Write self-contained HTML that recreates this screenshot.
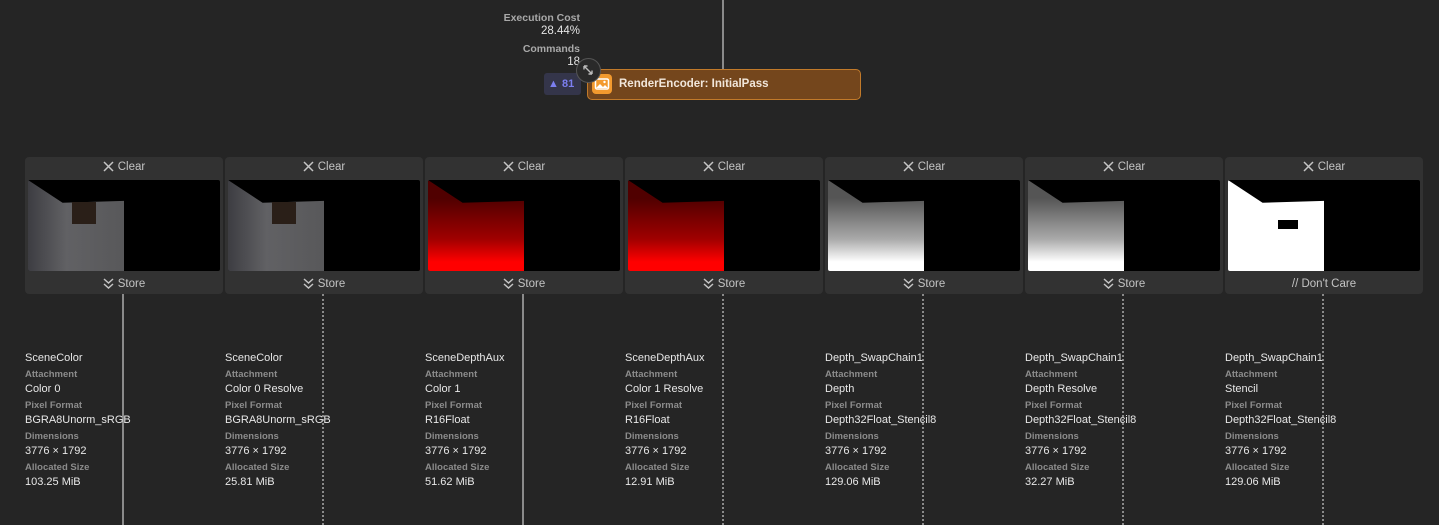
<!DOCTYPE html>
<html><head><meta charset="utf-8"><style>
*{margin:0;padding:0;box-sizing:border-box}
body{width:1439px;height:525px;background:#252525;position:relative;overflow:hidden;font-family:"Liberation Sans",sans-serif;color:#e4e4e4}
.a{position:absolute}
.card{position:absolute;top:157px;width:198px;height:137px;background:#323232;border-radius:4px}
.hd{position:absolute;left:0;right:0;text-align:center;font-size:11.5px;color:#c4c4c4;height:14px;line-height:14px}
.hd svg{vertical-align:-2px;margin-right:4px}
.img{position:absolute;left:3px;top:23px;width:192px;height:91px;background:#000;border-radius:2px;overflow:hidden}
.sh{position:absolute;left:0;top:0;width:96px;height:91px;clip-path:polygon(0 0,36% 25%,100% 23%,100% 100%,0 100%)}
.vl{position:absolute;width:0;top:294px;height:231px}
.sol{border-left:2px solid #8a8a8a}
.dash{border-left:2px dotted #8a8a8a}
.info{position:absolute;top:351px;font-size:11px;line-height:15.5px}
.info .l{font-size:9.5px;font-weight:bold;color:#8c8c8c}
.info .v{color:#e8e8e8}
</style></head><body>
<div class="a" style="left:722px;top:0;width:2px;height:70px;background:#8a8a8a"></div>
<div class="a" style="left:470px;top:12px;width:110px;text-align:right;font-size:10.5px;font-weight:bold;color:#a9a9a9">Execution Cost</div>
<div class="a" style="left:470px;top:25px;width:110px;text-align:right;font-size:11.5px;color:#e4e4e4">28.44%</div>
<div class="a" style="left:470px;top:43px;width:110px;text-align:right;font-size:10.5px;font-weight:bold;color:#a9a9a9">Commands</div>
<div class="a" style="left:470px;top:56px;width:110px;text-align:right;font-size:11.5px;color:#e4e4e4">18</div>
<div class="a" style="left:544px;top:73px;width:37px;height:22px;background:#34354a;border-radius:3px;font-size:11px;font-weight:bold;color:#7c7ff0;line-height:22px;padding-left:4px"><span style="font-size:11px">▲</span> 81</div>
<div class="a" style="left:587px;top:69px;width:274px;height:31px;background:#74461c;border:1.5px solid #c27a2a;border-radius:5px"></div>
<div class="a" style="left:592px;top:74px;width:20px;height:20px;background:#f39a2e;border-radius:4px">
<svg width="20" height="20" viewBox="0 0 20 20"><rect x="3.5" y="5" width="13" height="10" rx="1.5" fill="none" stroke="#fff" stroke-width="1.5"/><path d="M4 14 L8 10 L11 13 L13 11 L16 14Z" fill="#fff"/><circle cx="12.5" cy="8" r="1.2" fill="#fff"/></svg></div>
<div class="a" style="left:619px;top:78px;font-size:11.5px;font-weight:bold;color:#f1e6da">RenderEncoder: InitialPass</div>
<div class="a" style="left:576px;top:58px;width:25px;height:25px;border-radius:50%;background:#2a2a2a;border:1.5px solid #555">
<svg width="22" height="22" viewBox="0 0 22 22"><path d="M7 7 L15 15 M7 7 L7 10.5 M7 7 L10.5 7 M15 15 L15 11.5 M15 15 L11.5 15" stroke="#bbb" stroke-width="1.4" fill="none"/></svg></div>

<!-- cards -->
<div class="card" style="left:25px"><div class="hd" style="top:3px"><svg width="11" height="11" viewBox="0 0 11 11"><path d="M1 1L10 10M10 1L1 10" stroke="#c4c4c4" stroke-width="1.5"/></svg>Clear</div><div class="img"><div class="sh" style="background:linear-gradient(90deg,#3d3d42,#616164 40%,#58585a)"></div><div class="a" style="left:44px;top:22px;width:24px;height:22px;background:#2a1f18"></div></div><div class="hd" style="top:120px"><svg width="11" height="11" viewBox="0 0 11 11"><path d="M1 1L5.5 5L10 1M1 6L5.5 10L10 6" stroke="#c4c4c4" stroke-width="1.5" fill="none"/></svg>Store</div></div>
<div class="card" style="left:225px"><div class="hd" style="top:3px"><svg width="11" height="11" viewBox="0 0 11 11"><path d="M1 1L10 10M10 1L1 10" stroke="#c4c4c4" stroke-width="1.5"/></svg>Clear</div><div class="img"><div class="sh" style="background:linear-gradient(90deg,#3d3d42,#616164 40%,#58585a)"></div><div class="a" style="left:44px;top:22px;width:24px;height:22px;background:#2a1f18"></div></div><div class="hd" style="top:120px"><svg width="11" height="11" viewBox="0 0 11 11"><path d="M1 1L5.5 5L10 1M1 6L5.5 10L10 6" stroke="#c4c4c4" stroke-width="1.5" fill="none"/></svg>Store</div></div>
<div class="card" style="left:425px"><div class="hd" style="top:3px"><svg width="11" height="11" viewBox="0 0 11 11"><path d="M1 1L10 10M10 1L1 10" stroke="#c4c4c4" stroke-width="1.5"/></svg>Clear</div><div class="img"><div class="sh" style="background:linear-gradient(180deg,#500000 20%,#a00000 65%,#ff0000 90%)"></div></div><div class="hd" style="top:120px"><svg width="11" height="11" viewBox="0 0 11 11"><path d="M1 1L5.5 5L10 1M1 6L5.5 10L10 6" stroke="#c4c4c4" stroke-width="1.5" fill="none"/></svg>Store</div></div>
<div class="card" style="left:625px"><div class="hd" style="top:3px"><svg width="11" height="11" viewBox="0 0 11 11"><path d="M1 1L10 10M10 1L1 10" stroke="#c4c4c4" stroke-width="1.5"/></svg>Clear</div><div class="img"><div class="sh" style="background:linear-gradient(180deg,#500000 20%,#a00000 65%,#ff0000 90%)"></div></div><div class="hd" style="top:120px"><svg width="11" height="11" viewBox="0 0 11 11"><path d="M1 1L5.5 5L10 1M1 6L5.5 10L10 6" stroke="#c4c4c4" stroke-width="1.5" fill="none"/></svg>Store</div></div>
<div class="card" style="left:825px"><div class="hd" style="top:3px"><svg width="11" height="11" viewBox="0 0 11 11"><path d="M1 1L10 10M10 1L1 10" stroke="#c4c4c4" stroke-width="1.5"/></svg>Clear</div><div class="img"><div class="sh" style="background:linear-gradient(180deg,#555 20%,#aaa 65%,#fff 90%)"></div></div><div class="hd" style="top:120px"><svg width="11" height="11" viewBox="0 0 11 11"><path d="M1 1L5.5 5L10 1M1 6L5.5 10L10 6" stroke="#c4c4c4" stroke-width="1.5" fill="none"/></svg>Store</div></div>
<div class="card" style="left:1025px"><div class="hd" style="top:3px"><svg width="11" height="11" viewBox="0 0 11 11"><path d="M1 1L10 10M10 1L1 10" stroke="#c4c4c4" stroke-width="1.5"/></svg>Clear</div><div class="img"><div class="sh" style="background:linear-gradient(180deg,#555 20%,#aaa 65%,#fff 90%)"></div></div><div class="hd" style="top:120px"><svg width="11" height="11" viewBox="0 0 11 11"><path d="M1 1L5.5 5L10 1M1 6L5.5 10L10 6" stroke="#c4c4c4" stroke-width="1.5" fill="none"/></svg>Store</div></div>
<div class="card" style="left:1225px"><div class="hd" style="top:3px"><svg width="11" height="11" viewBox="0 0 11 11"><path d="M1 1L10 10M10 1L1 10" stroke="#c4c4c4" stroke-width="1.5"/></svg>Clear</div><div class="img"><div class="sh" style="background:#fff"></div><div class="a" style="left:50px;top:40px;width:20px;height:9px;background:#000"></div></div><div class="hd" style="top:120px">// Don't Care</div></div>

<div class="vl sol" style="left:122px"></div>
<div class="vl dash" style="left:322px"></div>
<div class="vl sol" style="left:522px"></div>
<div class="vl dash" style="left:722px"></div>
<div class="vl dash" style="left:922px"></div>
<div class="vl dash" style="left:1122px"></div>
<div class="vl dash" style="left:1322px"></div>

<div class="info" style="left:25px"><div class="v">SceneColor</div><div class="l">Attachment</div><div class="v">Color 0</div><div class="l">Pixel Format</div><div class="v">BGRA8Unorm_sRGB</div><div class="l">Dimensions</div><div class="v">3776 × 1792</div><div class="l">Allocated Size</div><div class="v">103.25 MiB</div></div>
<div class="info" style="left:225px"><div class="v">SceneColor</div><div class="l">Attachment</div><div class="v">Color 0 Resolve</div><div class="l">Pixel Format</div><div class="v">BGRA8Unorm_sRGB</div><div class="l">Dimensions</div><div class="v">3776 × 1792</div><div class="l">Allocated Size</div><div class="v">25.81 MiB</div></div>
<div class="info" style="left:425px"><div class="v">SceneDepthAux</div><div class="l">Attachment</div><div class="v">Color 1</div><div class="l">Pixel Format</div><div class="v">R16Float</div><div class="l">Dimensions</div><div class="v">3776 × 1792</div><div class="l">Allocated Size</div><div class="v">51.62 MiB</div></div>
<div class="info" style="left:625px"><div class="v">SceneDepthAux</div><div class="l">Attachment</div><div class="v">Color 1 Resolve</div><div class="l">Pixel Format</div><div class="v">R16Float</div><div class="l">Dimensions</div><div class="v">3776 × 1792</div><div class="l">Allocated Size</div><div class="v">12.91 MiB</div></div>
<div class="info" style="left:825px"><div class="v">Depth_SwapChain1</div><div class="l">Attachment</div><div class="v">Depth</div><div class="l">Pixel Format</div><div class="v">Depth32Float_Stencil8</div><div class="l">Dimensions</div><div class="v">3776 × 1792</div><div class="l">Allocated Size</div><div class="v">129.06 MiB</div></div>
<div class="info" style="left:1025px"><div class="v">Depth_SwapChain1</div><div class="l">Attachment</div><div class="v">Depth Resolve</div><div class="l">Pixel Format</div><div class="v">Depth32Float_Stencil8</div><div class="l">Dimensions</div><div class="v">3776 × 1792</div><div class="l">Allocated Size</div><div class="v">32.27 MiB</div></div>
<div class="info" style="left:1225px"><div class="v">Depth_SwapChain1</div><div class="l">Attachment</div><div class="v">Stencil</div><div class="l">Pixel Format</div><div class="v">Depth32Float_Stencil8</div><div class="l">Dimensions</div><div class="v">3776 × 1792</div><div class="l">Allocated Size</div><div class="v">129.06 MiB</div></div>
</body></html>
